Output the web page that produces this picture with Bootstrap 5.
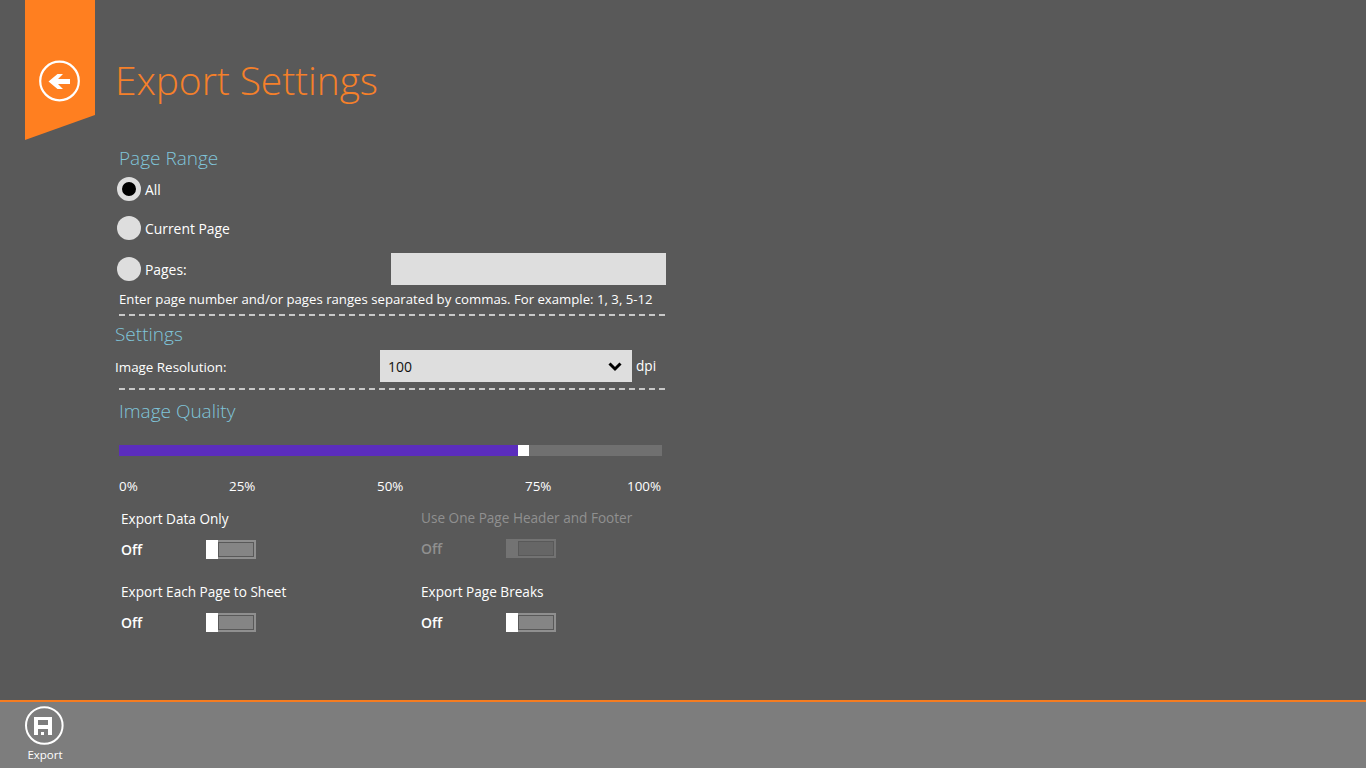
<!DOCTYPE html>
<html lang="en">
<head>
<meta charset="utf-8">
<title>Export Settings</title>
<link href="https://cdn.jsdelivr.net/npm/bootstrap@5.3.0/dist/css/bootstrap.min.css" rel="stylesheet">
<style>
html,body{height:100%;}
body{background:#595959;color:#fff;font-family:"Open Sans","Noto Sans",sans-serif;font-size:14px;overflow:hidden;}
.shell{height:768px;}
.head-row{height:140px;padding-left:25px;}
.ribbon{width:70px;height:140px;background:#ff7f20;clip-path:polygon(0 0,100% 0,100% 115px,0 100%);padding:60px 0 0 14px;}
.back-ico{display:block;width:42px;height:42px;}
.page-title{font-size:39px;font-weight:300;color:#f5802a;margin:56px 0 0 20px;line-height:48px;letter-spacing:-.1px;}
.pane{width:560px;margin-left:115px;}
.sect-head{font-size:19px;font-weight:300;color:#80c5da;line-height:26px;margin:0;}
.ind{margin-left:4px;}
.sect-one{margin-top:5px;}
.sect-two{margin-top:5px;}
.sect-three{margin-top:8px;}
.pick{height:24px;margin-left:-2px;}
.pick .form-check-input{width:24px;height:24px;margin:0 4px 0 0;border:0;background-color:#dedede;background-image:none;flex:none;float:none;}
.pick .form-check-input:checked{background-color:#000;border:5px solid #dedede;}
.pick .form-check-input:focus{box-shadow:none;}
.pick label{font-size:13.900px;line-height:24px;margin-top:2px;}
.gap-a{margin-top:6px;}
.gap-b{margin-top:15px;}
.gap-c{margin-top:17px;}
.pages-box{width:275px;height:32px;margin-left:auto;margin-right:9px;border:0;border-radius:0;background:#dedede;margin-top:-8px;margin-bottom:-8px;}
.hint{font-size:13.200px;line-height:18px;margin-top:9px;white-space:nowrap;}
.dash{height:2px;margin:6px 0 0 4px;width:546px;background:repeating-linear-gradient(90deg,#c9c9c9 0 6px,transparent 6px 10px);}
.res-row{height:32px;margin-top:3px;}
.res-label{width:265px;font-size:13.400px;margin-top:2px;}
.res-select{width:252px;height:32px;border:0;border-radius:0;background-color:#dedede;color:#111;font-size:14px;padding:0 30px 0 8px;background-size:16px 16px;background-position:right 9px center;background-image:url("data:image/svg+xml,%3csvg xmlns='http://www.w3.org/2000/svg' viewBox='0 0 16 16'%3e%3cpath fill='none' stroke='%23000' stroke-width='3' d='M2.500 5.500 8 11l5.500-5.500'/%3e%3c/svg%3e");}
.dpi{margin-left:4px;font-size:13.600px;}
.slider-wrap{width:543px;margin:21px 0 0 4px;position:relative;}
.slider-wrap .progress{height:11px;border-radius:0;background:#707070;}
.slider-wrap .progress-bar{background:#5b2dbd;}
.slider-thumb{position:absolute;left:399px;top:0;width:11px;height:11px;background:#fff;}
.ticks{display:grid;grid-template-columns:110px 148px 148px 102px auto;width:543px;margin:20px 0 0 4px;font-size:13.400px;line-height:20px;}
.opts{display:grid;grid-template-columns:300px 300px;row-gap:23px;margin:13px 0 0 6px;width:600px;}
.opt-title{font-size:13.600px;line-height:20px;}
.opt-row{height:19px;margin-top:11px;}
.opt-state{width:85px;font-size:14px;font-weight:600;line-height:19px;}
.tog{width:50px;height:19px;border:2px solid #8f8f8f;position:relative;padding:1px;}
.tog-fill{display:block;height:100%;margin-left:10px;background:#858585;}
.tog-knob{position:absolute;left:-2px;top:-2px;width:12px;height:19px;background:#fff;}
.is-off{color:#909090;margin-top:-1px;margin-bottom:1px;}
.is-off .tog{border-color:#737373;}
.is-off .tog-fill{background:#666;}
.is-off .tog-knob{background:#737373;}
.app-bar{margin-top:auto;height:68px;background:#7d7d7d;border-top:2px solid #f57c20;padding:4px 0 0 25px;}
.bar-btn{width:40px;color:#fff;background:none;border:0;padding:0;}
.bar-ico{display:block;width:39px;height:40px;}
.bar-label{font-size:11.500px;line-height:16px;margin-top:1px;width:40px;text-align:center;}
</style>
</head>
<body>
<div class="shell d-flex flex-column">
  <header class="head-row d-flex flex-shrink-0">
    <a class="ribbon d-block" href="#" aria-label="Back">
      <svg class="back-ico" viewBox="0 0 42 42"><circle cx="20.500" cy="21" r="19.300" fill="none" stroke="#fff" stroke-width="2.200"/><path d="M31 19H19l5-5h-5.500L9.500 21.500 18.500 29H24l-5-5h12z" fill="#fff"/></svg>
    </a>
    <h1 class="page-title">Export Settings</h1>
  </header>
  <main class="pane">
    <h2 class="sect-head ind sect-one">Page Range</h2>
    <div class="ind">
      <div class="pick d-flex align-items-center gap-a"><input class="form-check-input" type="radio" name="rng" id="r1" checked><label for="r1">All</label></div>
      <div class="pick d-flex align-items-center gap-b"><input class="form-check-input" type="radio" name="rng" id="r2"><label for="r2">Current Page</label></div>
      <div class="pick d-flex align-items-center gap-c"><input class="form-check-input" type="radio" name="rng" id="r3"><label for="r3">Pages:</label><input class="pages-box form-control" type="text" aria-label="Pages"></div>
      <div class="hint">Enter page number and/or pages ranges separated by commas. For example: 1, 3, 5-12</div>
    </div>
    <div class="dash"></div>
    <h2 class="sect-head sect-two">Settings</h2>
    <div class="res-row d-flex align-items-center">
      <span class="res-label">Image Resolution:</span>
      <select class="form-select res-select" aria-label="Image Resolution"><option>100</option></select>
      <span class="dpi">dpi</span>
    </div>
    <div class="dash"></div>
    <h2 class="sect-head ind sect-three">Image Quality</h2>
    <div class="slider-wrap">
      <div class="progress"><div class="progress-bar" style="width:73.500%"></div></div>
      <span class="slider-thumb"></span>
    </div>
    <div class="ticks"><span>0%</span><span>25%</span><span>50%</span><span>75%</span><span>100%</span></div>
    <div class="opts">
      <div><div class="opt-title">Export Data Only</div><div class="opt-row d-flex align-items-center"><span class="opt-state">Off</span><span class="tog"><span class="tog-knob"></span><span class="tog-fill"></span></span></div></div>
      <div class="is-off"><div class="opt-title">Use One Page Header and Footer</div><div class="opt-row d-flex align-items-center"><span class="opt-state">Off</span><span class="tog"><span class="tog-knob"></span><span class="tog-fill"></span></span></div></div>
      <div><div class="opt-title">Export Each Page to Sheet</div><div class="opt-row d-flex align-items-center"><span class="opt-state">Off</span><span class="tog"><span class="tog-knob"></span><span class="tog-fill"></span></span></div></div>
      <div><div class="opt-title">Export Page Breaks</div><div class="opt-row d-flex align-items-center"><span class="opt-state">Off</span><span class="tog"><span class="tog-knob"></span><span class="tog-fill"></span></span></div></div>
    </div>
  </main>
  <footer class="app-bar flex-shrink-0">
    <button class="bar-btn d-block" type="button">
      <svg class="bar-ico" viewBox="0 0 39 40"><circle cx="19.300" cy="19.500" r="18.300" fill="none" stroke="#fff" stroke-width="2"/><path fill-rule="evenodd" d="M9 11h18v18H9zM13 14v5h10v-5zM13 23v6h10v-6z" fill="#fff"/><rect x="16" y="26" width="3" height="3" fill="#fff"/></svg>
      <div class="bar-label">Export</div>
    </button>
  </footer>
</div>
<script src="https://cdn.jsdelivr.net/npm/bootstrap@5.3.0/dist/js/bootstrap.bundle.min.js"></script>
</body>
</html>
